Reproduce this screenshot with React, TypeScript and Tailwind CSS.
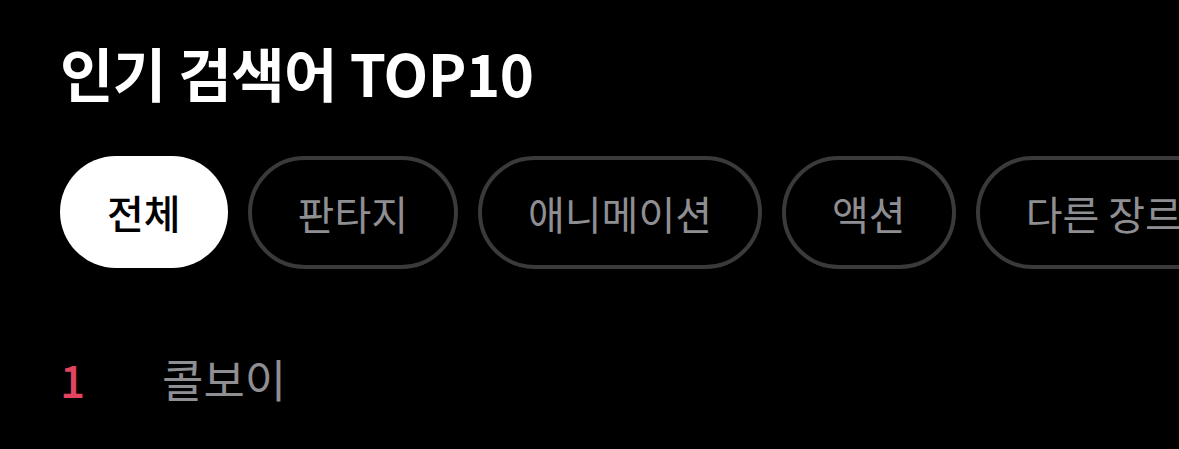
const genres = ["전체", "판타지", "애니메이션", "액션", "다른 장르"];

const ranking = [{ rank: 1, keyword: "콜보이" }];

export default function App() {
  return (
    <div
      className="h-[449px] w-[1179px] overflow-hidden bg-black pt-[32px] pl-[60px]"
      style={{ fontFamily: '"Noto Sans CJK KR", "Noto Sans", sans-serif' }}
    >
      <h1 className="text-[58px] leading-[80px] font-bold tracking-[-0.5px] text-white">
        인기 검색어 TOP10
      </h1>

      <div className="mt-[44px] flex gap-[20px] whitespace-nowrap">
        {genres.map((genre, i) =>
          i === 0 ? (
            <button
              key={genre}
              className="flex h-[112px] shrink-0 items-center rounded-full bg-white px-[47px] text-[40px] font-medium text-black"
            >
              {genre}
            </button>
          ) : (
            <button
              key={genre}
              className="flex h-[113px] shrink-0 items-center rounded-full border-[4px] border-[#3a3a3c] px-[46px] text-[40px] text-[#8e8e93]"
            >
              {genre}
            </button>
          ),
        )}
      </div>

      <ul className="mt-[82px]">
        {ranking.map(({ rank, keyword }) => (
          <li key={rank} className="flex items-center leading-[56px]">
            <span className="w-[102px] text-[44px] font-medium text-[#e2445f]">
              {rank}
            </span>
            <span className="text-[45px] text-[#8e8e93]">{keyword}</span>
          </li>
        ))}
      </ul>
    </div>
  );
}
